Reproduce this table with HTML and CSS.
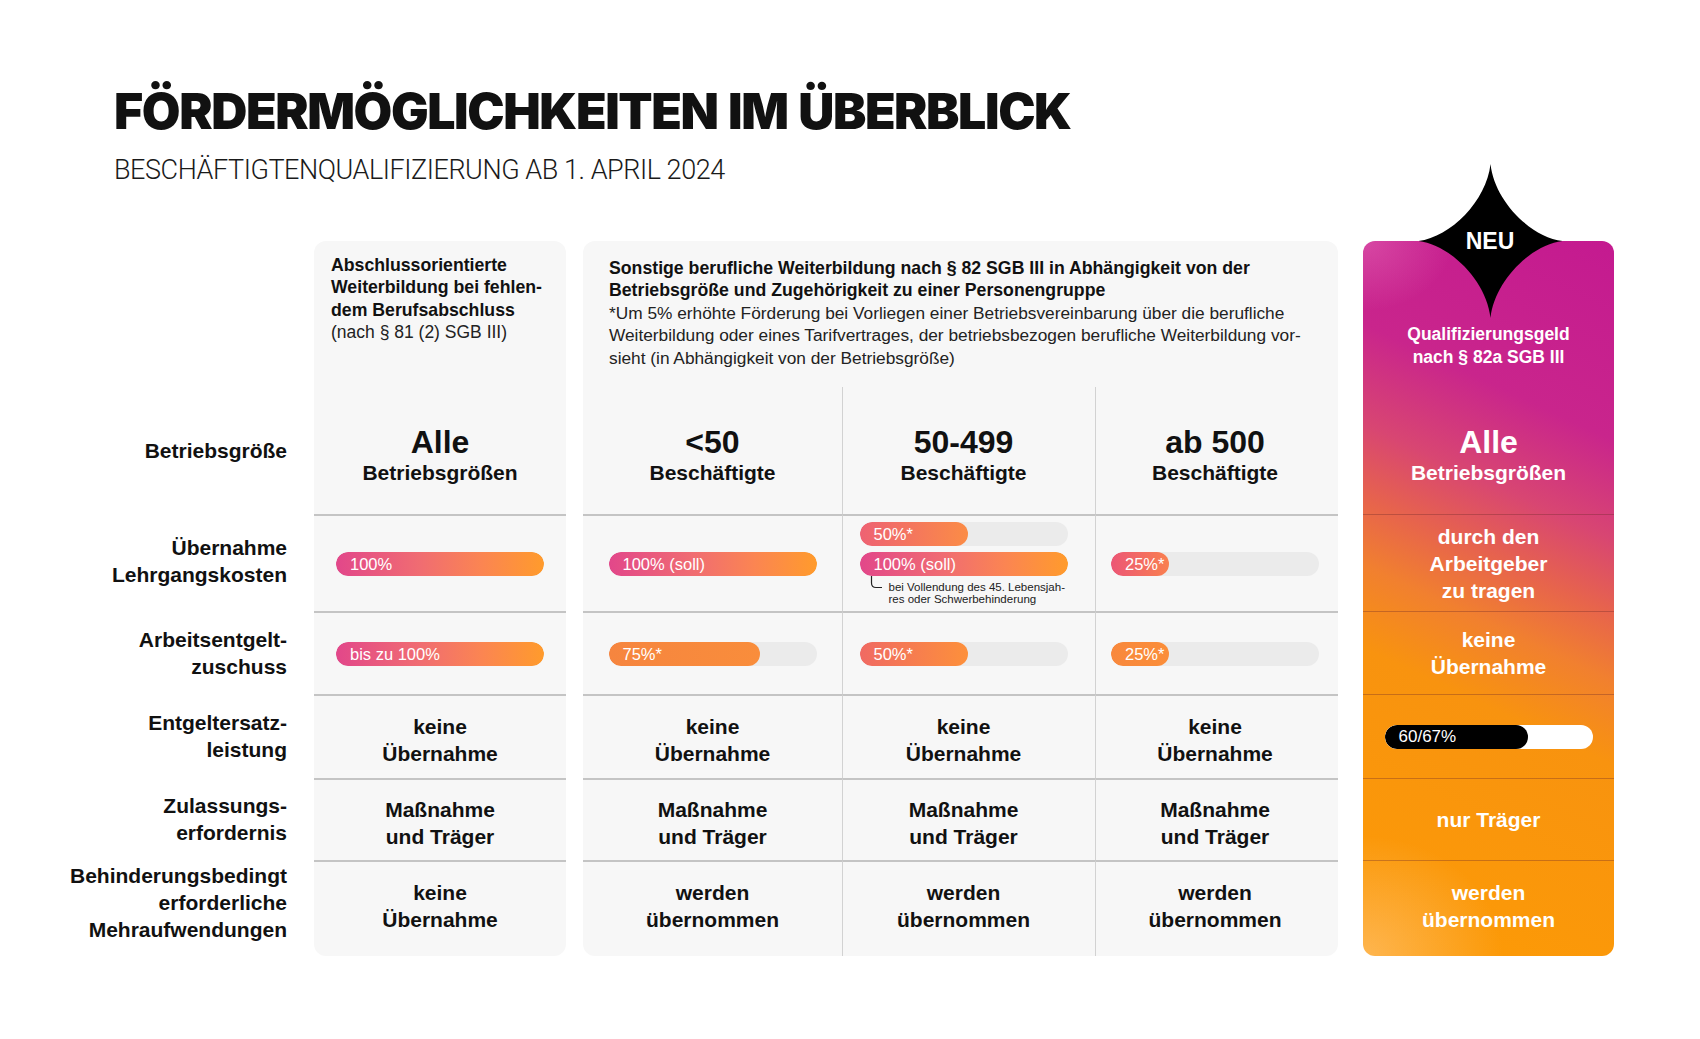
FILE: index.html
```html
<!DOCTYPE html>
<html lang="de">
<head>
<meta charset="utf-8">
<title>Fördermöglichkeiten im Überblick</title>
<link rel="stylesheet" href="styles.css">
</head>
<body>
<div class="page">
  <h1 class="title">FÖRDERMÖGLICHKEITEN IM ÜBERBLICK</h1>
  <p class="subtitle">BESCHÄFTIGTENQUALIFIZIERUNG AB 1. APRIL 2024</p>

  <div class="chart">
    <div class="labels rows">
      <div class="label"></div>
      <div class="label">Betriebsgröße</div>
      <div class="label r-lehr">Übernahme<br>Lehrgangskosten</div>
      <div class="label">Arbeitsentgelt-<br>zuschuss</div>
      <div class="label">Entgeltersatz-<br>leistung</div>
      <div class="label">Zulassungs-<br>erfordernis</div>
      <div class="label r-beh-label">Behinderungsbedingt<br>erforderliche<br>Mehraufwendungen</div>
    </div>

    <div class="card card-a rows">
      <div class="head head-a">
        <b>Abschlussorientierte<br>Weiterbildung bei fehlen-<br>dem Berufsabschluss</b><br>
        <span class="light">(nach § 81 (2) SGB III)</span>
      </div>
      <div class="cell r-size"><span class="big">Alle</span><span>Betriebsgrößen</span></div>
      <div class="cell line">
        <div class="bar"><div class="fill g-full" style="width:100%"><span class="bar-text">100%</span></div></div>
      </div>
      <div class="cell line">
        <div class="bar"><div class="fill g-full" style="width:100%"><span class="bar-text">bis zu 100%</span></div></div>
      </div>
      <div class="cell line r-low">keine<br>Übernahme</div>
      <div class="cell line r-low">Maßnahme<br>und Träger</div>
      <div class="cell line r-beh">keine<br>Übernahme</div>
    </div>

    <div class="card card-b rows">
      <div class="head head-b">
        <b>Sonstige berufliche Weiterbildung nach § 82 SGB III in Abhängigkeit von der<br>Betriebsgröße und Zugehörigkeit zu einer Personengruppe</b><br>
        <span class="light">*Um 5% erhöhte Förderung bei Vorliegen einer Betriebsvereinbarung über die berufliche<br>Weiterbildung oder eines Tarifvertrages, der betriebsbezogen berufliche Weiterbildung vor-<br>sieht (in Abhängigkeit von der Betriebsgröße)</span>
      </div>

      <div class="cell r-size"><span class="big">&lt;50</span><span>Beschäftigte</span></div>
      <div class="cell vline c2 r-size"><span class="big">50-499</span><span>Beschäftigte</span></div>
      <div class="cell vline c3 r-size"><span class="big">ab 500</span><span>Beschäftigte</span></div>

      <div class="cell line">
        <div class="bar"><div class="fill g-full" style="width:100%"><span class="bar-text">100% (soll)</span></div></div>
      </div>
      <div class="cell line vline c2 stack">
        <div class="bar"><div class="fill g-50a" style="width:52%"><span class="bar-text">50%*</span></div></div>
        <div class="bar"><div class="fill g-full" style="width:100%"><span class="bar-text">100% (soll)</span></div></div>
        <div class="note">
          <svg class="hook" width="29" height="16" viewBox="0 0 29 16"><path d="M11.5 0 V7 Q11.5 11.5 16 11.5 H22" fill="none" stroke="#222" stroke-width="1.2"/></svg>
          <span class="note-text">bei Vollendung des 45. Lebensjah-<br>res oder Schwerbehinderung</span>
        </div>
      </div>
      <div class="cell line vline c3">
        <div class="bar"><div class="fill g-25a" style="width:28%"><span class="bar-text">25%*</span></div></div>
      </div>

      <div class="cell line">
        <div class="bar"><div class="fill g-75" style="width:73%"><span class="bar-text">75%*</span></div></div>
      </div>
      <div class="cell line vline c2">
        <div class="bar"><div class="fill g-50b" style="width:52%"><span class="bar-text">50%*</span></div></div>
      </div>
      <div class="cell line vline c3">
        <div class="bar"><div class="fill g-25b" style="width:28%"><span class="bar-text">25%*</span></div></div>
      </div>

      <div class="cell line r-low">keine<br>Übernahme</div>
      <div class="cell line vline c2 r-low">keine<br>Übernahme</div>
      <div class="cell line vline c3 r-low">keine<br>Übernahme</div>

      <div class="cell line r-low">Maßnahme<br>und Träger</div>
      <div class="cell line vline c2 r-low">Maßnahme<br>und Träger</div>
      <div class="cell line vline c3 r-low">Maßnahme<br>und Träger</div>

      <div class="cell line r-beh">werden<br>übernommen</div>
      <div class="cell line vline c2 r-beh">werden<br>übernommen</div>
      <div class="cell line vline c3 r-beh">werden<br>übernommen</div>
    </div>

    <div class="card card-c rows">
      <div class="star">
        <svg width="150" height="154" viewBox="-75 -77 150 154"><path d="M0 -77 C 4 -40, 40 -4, 72 0 C 40 4, 4 40, 0 77 C -4 40, -40 4, -72 0 C -40 -4, -4 -40, 0 -77 Z" fill="#000"/></svg>
        <span class="star-text">NEU</span>
      </div>
      <div class="head head-c">Qualifizierungsgeld<br>nach § 82a SGB III</div>
      <div class="cell r-size"><span class="big">Alle</span><span>Betriebsgrößen</span></div>
      <div class="cell cline">durch den<br>Arbeitgeber<br>zu tragen</div>
      <div class="cell cline">keine<br>Übernahme</div>
      <div class="cell cline">
        <div class="bar bar-white"><div class="fill g-black" style="width:69%"><span class="bar-text bar-text-lg">60/67%</span></div></div>
      </div>
      <div class="cell cline">nur Träger</div>
      <div class="cell cline r-beh">werden<br>übernommen</div>
    </div>
  </div>
</div>
</body>
</html>
```

FILE: styles.css
```css
html, body {
  margin: 0;
  padding: 0;
  background: #ffffff;
}

body {
  font-family: "Liberation Sans", Arial, sans-serif;
  color: #111111;
}

.page {
  width: 1700px;
  height: 1039px;
  box-sizing: border-box;
  padding-top: 86px;
}

.title {
  margin: 0 0 0 114px;
  font-family: Inter, "Liberation Sans", sans-serif;
  font-weight: 900;
  font-size: 50px;
  line-height: 50px;
  letter-spacing: -1.4px;
  word-spacing: 2px;
  color: #111111;
}

.subtitle {
  margin: 21px 0 0 114px;
  font-family: Roboto, "Liberation Sans", sans-serif;
  font-weight: 300;
  font-size: 27px;
  line-height: 27px;
  letter-spacing: -0.45px;
  color: #1a1a1a;
}

.chart {
  display: flex;
  align-items: flex-start;
  margin-top: 57px;
}

.rows {
  display: grid;
  grid-template-rows: 146px 127px 97px 83px 84px 82px 96px;
}

.labels {
  width: 287px;
}

.label {
  display: flex;
  align-items: center;
  justify-content: flex-end;
  text-align: right;
  font-weight: 700;
  font-size: 21px;
  line-height: 27px;
  white-space: nowrap;
  box-sizing: border-box;
}

.r-lehr {
  padding-bottom: 4px;
}

.r-beh-label {
  padding-bottom: 12px;
}

.card {
  background: #f7f7f7;
  border-radius: 12px;
}

.card-a {
  width: 252px;
  margin-left: 27px;
}

.card-b {
  width: 755px;
  margin-left: 17px;
  grid-template-columns: 259px 253px 243px;
}

.card-c {
  position: relative;
  width: 251px;
  margin-left: 25px;
  color: #ffffff;
  background:
    radial-gradient(ellipse 140px 120px at 0% 100%, rgba(255, 214, 170, 0.45), rgba(255, 214, 170, 0) 100%),
    radial-gradient(ellipse 90px 70px at 0% 0%, rgba(235, 120, 190, 0.45), rgba(235, 120, 190, 0) 100%),
    linear-gradient(205deg, #c41a90 0%, #c9258c 24%, #d84672 36%, #e7644c 45%, #f1802f 53%, #f8930f 63%, #fd9b05 100%);
}

.head {
  font-size: 17.5px;
  line-height: 22.4px;
  white-space: nowrap;
}

.head b {
  font-weight: 700;
  font-size: 17.7px;
  color: #111111;
}

.light {
  font-weight: 400;
  color: #222222;
}

.head-a {
  padding: 13px 17px 0;
}

.head-b {
  grid-column: 1 / -1;
  padding: 16px 26px 0;
}

.head-b .light {
  font-size: 17.3px;
}

.head-c {
  padding-top: 82px;
  text-align: center;
  font-weight: 700;
  font-size: 17.5px;
  line-height: 23px;
}

.cell {
  display: flex;
  flex-direction: column;
  align-items: center;
  justify-content: center;
  text-align: center;
  font-weight: 700;
  font-size: 21px;
  line-height: 27px;
  box-sizing: border-box;
  min-width: 0;
}

.r-size {
  padding-top: 10px;
}

.r-low {
  padding-top: 5px;
}

.r-beh {
  padding-bottom: 6px;
}

.c2 {
  padding-right: 11px;
}

.c3 {
  padding-right: 4px;
}

.big {
  font-size: 32px;
  line-height: 34px;
}

.line {
  border-top: 2px solid #c4c4c4;
}

.vline {
  border-left: 1px solid #d2d2d2;
}

.cline {
  border-top: 1px solid rgba(110, 40, 40, 0.35);
}

.stack {
  justify-content: flex-start;
  padding-top: 6px;
  gap: 6px;
}

.bar {
  width: 208px;
  height: 24px;
  border-radius: 12px;
  background: #ebebeb;
  overflow: hidden;
  flex: none;
}

.bar-white {
  background: #ffffff;
}

.fill {
  height: 100%;
  border-radius: 12px;
  display: flex;
  align-items: center;
}

.bar-text {
  padding-left: 14px;
  color: #ffffff;
  font-weight: 400;
  font-size: 16.5px;
  line-height: 24px;
  white-space: nowrap;
}

.bar-text-lg {
  font-size: 17px;
}

.g-full {
  background: linear-gradient(90deg, #e2478a 0%, #f06c72 40%, #fb8552 70%, #ff9b2c 100%);
}

.g-50a {
  background: linear-gradient(90deg, #ee6273 0%, #fb8c46 100%);
}

.g-25a {
  background: linear-gradient(90deg, #ec5676 0%, #f9804f 100%);
}

.g-75 {
  background: linear-gradient(90deg, #f6853f 0%, #f98d3b 100%);
}

.g-50b {
  background: linear-gradient(90deg, #f06a63 0%, #fd903b 100%);
}

.g-25b {
  background: linear-gradient(90deg, #f8883d 0%, #fb8e39 100%);
}

.g-black {
  background: #000000;
}

.note {
  display: flex;
  width: 208px;
  margin-top: -6px;
  text-align: left;
}

.hook {
  flex: none;
}

.note-text {
  padding-top: 5px;
  font-weight: 400;
  font-size: 11.5px;
  line-height: 12px;
  color: #222222;
  white-space: nowrap;
}

.star {
  position: absolute;
  left: 50%;
  top: -77px;
  width: 150px;
  height: 154px;
  transform: translateX(-49%);
}

.star svg {
  display: block;
}

.star-text {
  position: absolute;
  left: 0;
  right: 0;
  top: 64px;
  text-align: center;
  font-weight: 700;
  font-size: 23px;
  line-height: 26px;
  color: #ffffff;
}
```
